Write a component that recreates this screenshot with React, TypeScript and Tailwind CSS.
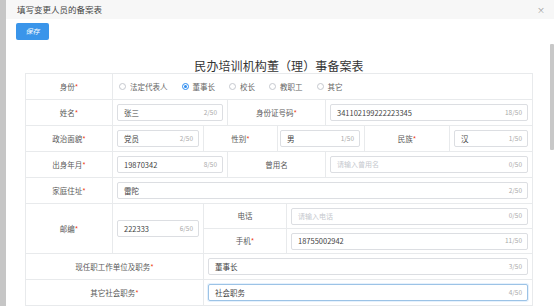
const font = { fontFamily: '"Noto Sans CJK SC", "Noto Sans", sans-serif' };

const Req = () => <span className="text-[#ed4014]">*</span>;

const Label = ({ text, req = true, className = "" }) => (
  <div
    className={`flex items-center justify-center border-r border-b border-[#e8eaec] text-[7.5px] text-[#5a5a5a] ${className}`}
  >
    {text}
    {req && <Req />}
  </div>
);

const Field = ({ value = "", placeholder = "", count, focus = false }) => (
  <div
    className={`flex h-[17px] w-full items-center justify-between rounded-[2px] border bg-white pl-[6px] pr-[5px] ${
      focus
        ? "border-[#9cc3e6] shadow-[0_0_0_1px_rgba(45,140,240,0.12)]"
        : "border-[#dcdee2]"
    }`}
  >
    {value ? (
      <span className="text-[7.5px] text-[#444]">{value}</span>
    ) : (
      <span className="text-[7px] text-[#c5c8ce]">{placeholder}</span>
    )}
    <span className="text-[6.5px] text-[#aaa]">{count}</span>
  </div>
);

const Cell = ({ className = "", children }) => (
  <div
    className={`flex items-center border-r border-b border-[#e8eaec] pl-[4px] pr-[4px] ${className}`}
  >
    {children}
  </div>
);

const Radio = ({ label, checked = false }) => (
  <div className="flex items-center gap-[4px]">
    <span
      className={`flex h-[7px] w-[7px] items-center justify-center rounded-full border ${
        checked ? "border-[#2d8cf0]" : "border-[#c5c8ce]"
      }`}
    >
      {checked && <span className="h-[3px] w-[3px] rounded-full bg-[#2d8cf0]" />}
    </span>
    <span className="text-[7.5px] text-[#666]">{label}</span>
  </div>
);

export default function App() {
  return (
    <div
      className="flex h-[306px] w-[554px] overflow-hidden bg-white"
      style={font}
    >
      <div className="w-[6px] shrink-0 bg-[#c6c6c6]" />
      <div className="flex min-w-0 flex-1 flex-col">
        {/* header */}
        <div className="flex h-[19px] shrink-0 items-center justify-between bg-[#f7f7f7] pl-[11px] pr-[9px]">
          <span className="text-[8.5px] text-[#444]">填写变更人员的备案表</span>
          <span className="text-[8px] leading-none text-[#999]">×</span>
        </div>

        <div className="flex flex-1">
          <div className="flex-1 pl-[10px] pt-[4px]">
            <button className="flex h-[17px] w-[33px] items-center justify-center rounded-[2px] bg-[#3a95ea] text-[7px] italic text-white">
              保存
            </button>

            <div className="ml-[9px] w-[508px]">
              <div className="mt-[18px] h-[15px] text-center text-[12px] leading-[15px] tracking-[0.1px] text-[#333]">
                民办培训机构董（理）事备案表
              </div>

              <div className="border-t border-l border-[#e8eaec]">
                {/* 身份 */}
                <div className="flex h-[26px]">
                  <Label text="身份" className="w-[87px]" />
                  <div className="flex flex-1 items-center gap-[14px] border-r border-b border-[#e8eaec] pl-[6px]">
                    <Radio label="法定代表人" />
                    <Radio label="董事长" checked />
                    <Radio label="校长" />
                    <Radio label="教职工" />
                    <Radio label="其它" />
                  </div>
                </div>

                {/* 姓名 */}
                <div className="flex h-[26px]">
                  <Label text="姓名" className="w-[87px]" />
                  <Cell className="w-[115px]">
                    <Field value="张三" count="2/50" />
                  </Cell>
                  <Label text="身份证号码" className="w-[98px]" />
                  <Cell className="flex-1">
                    <Field value="341102199222223345" count="18/50" />
                  </Cell>
                </div>

                {/* 政治面貌 */}
                <div className="flex h-[26px]">
                  <Label text="政治面貌" className="w-[87px]" />
                  <Cell className="w-[91px]">
                    <Field value="党员" count="2/50" />
                  </Cell>
                  <Label text="性别" className="w-[74px]" />
                  <Cell className="w-[87px] !pl-[2px]">
                    <Field value="男" count="1/50" />
                  </Cell>
                  <Label text="民族" className="w-[85px]" />
                  <Cell className="flex-1">
                    <Field value="汉" count="1/50" />
                  </Cell>
                </div>

                {/* 出身年月 */}
                <div className="flex h-[26px]">
                  <Label text="出身年月" className="w-[87px]" />
                  <Cell className="w-[115px]">
                    <Field value="19870342" count="8/50" />
                  </Cell>
                  <Label text="曾用名" req={false} className="w-[98px]" />
                  <Cell className="flex-1">
                    <Field placeholder="请输入曾用名" count="0/50" />
                  </Cell>
                </div>

                {/* 家庭住址 */}
                <div className="flex h-[26px]">
                  <Label text="家庭住址" className="w-[87px]" />
                  <Cell className="flex-1">
                    <Field value="雷陀" count="2/50" />
                  </Cell>
                </div>

                {/* 邮编 */}
                <div className="flex h-[50px]">
                  <Label text="邮编" className="w-[87px]" />
                  <Cell className="w-[91px]">
                    <Field value="222333" count="6/50" />
                  </Cell>
                  <div className="flex flex-1 flex-col">
                    <div className="flex h-[25px]">
                      <Label text="电话" req={false} className="w-[83px]" />
                      <Cell className="flex-1">
                        <Field placeholder="请输入电话" count="0/50" />
                      </Cell>
                    </div>
                    <div className="flex h-[25px]">
                      <Label text="手机" className="w-[83px]" />
                      <Cell className="flex-1">
                        <Field value="18755002942" count="11/50" />
                      </Cell>
                    </div>
                  </div>
                </div>

                {/* 现任职工作单位及职务 */}
                <div className="flex h-[26px]">
                  <Label text="现任职工作单位及职务" className="w-[178px]" />
                  <Cell className="flex-1">
                    <Field value="董事长" count="3/50" />
                  </Cell>
                </div>

                {/* 其它社会职务 */}
                <div className="flex h-[26px]">
                  <Label text="其它社会职务" className="w-[178px]" />
                  <Cell className="flex-1">
                    <Field value="社会职务" count="4/50" focus />
                  </Cell>
                </div>
              </div>
            </div>
          </div>

          {/* scrollbar */}
          <div className="w-[4px] shrink-0 pt-[25px]">
            <div className="h-[106px] w-[4px] rounded-[1px] bg-[#c8c8c8]" />
          </div>
        </div>
      </div>
    </div>
  );
}
